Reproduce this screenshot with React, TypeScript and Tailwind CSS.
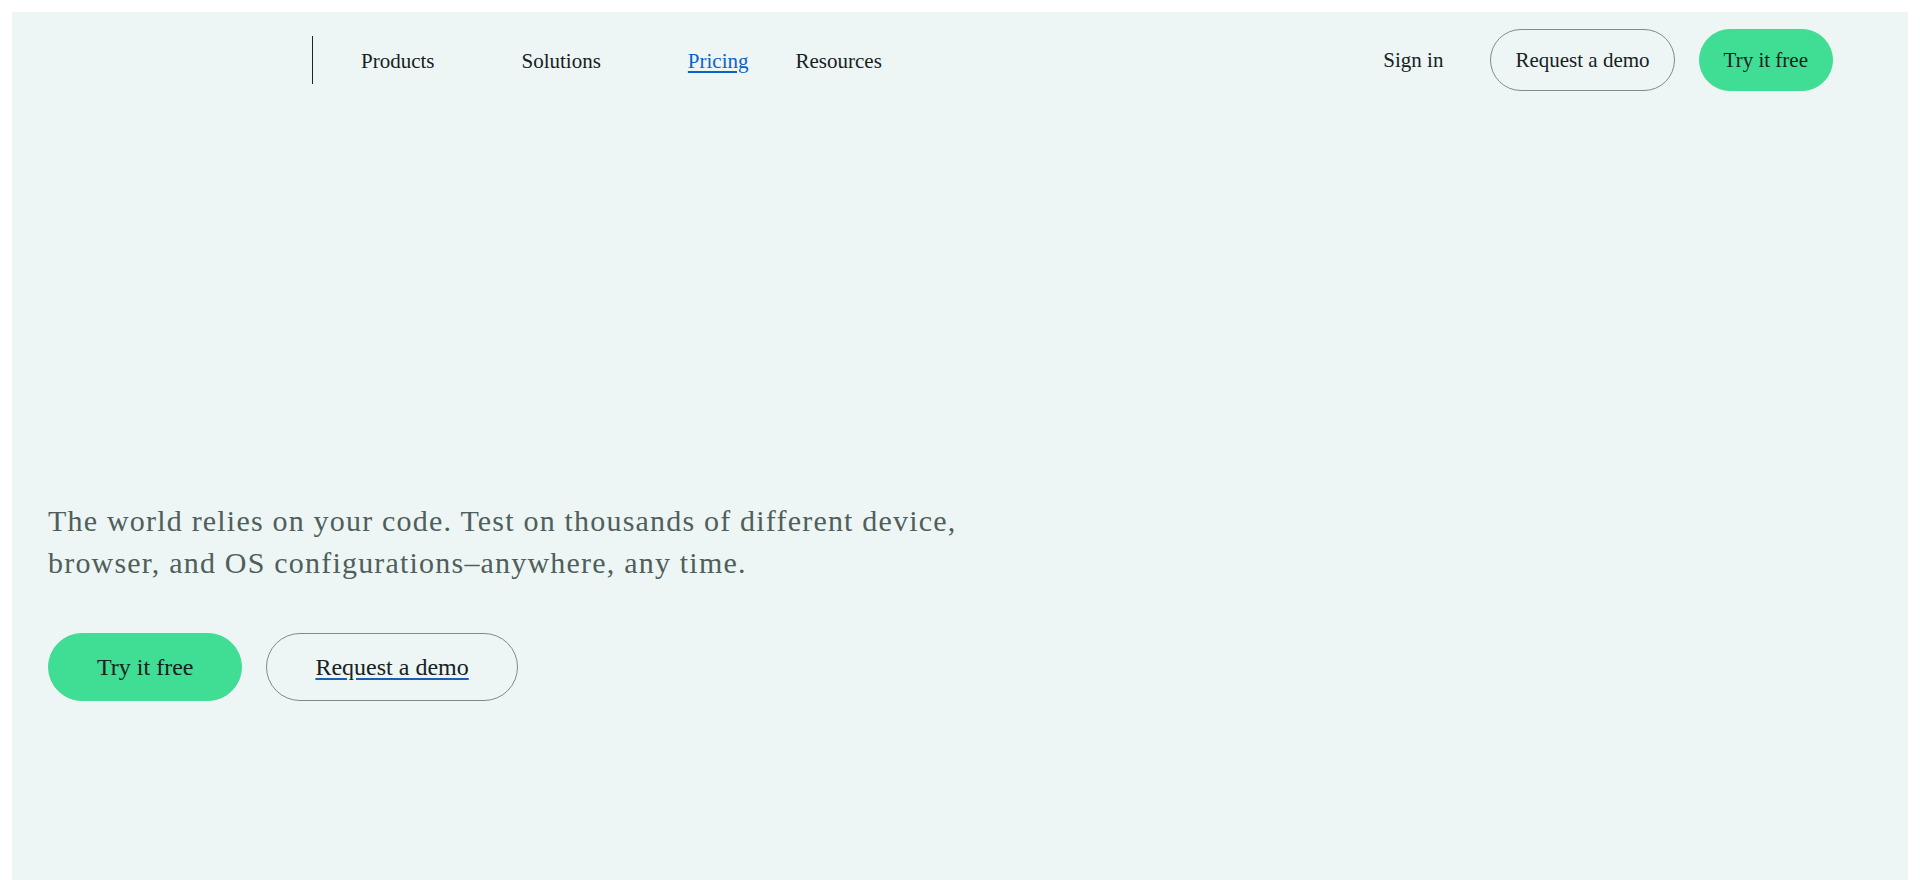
import React from "react";

const serif = "font-['Liberation_Serif','Times_New_Roman',serif]";

export default function App() {
  return (
    <div className={`min-h-screen bg-white p-3 ${serif}`}>
      <div className="bg-[#edf6f4] h-[868px] w-full flex flex-col">
        {/* Nav */}
        <nav className="flex items-center justify-between pt-[17px] pr-[75px]">
          <div className="flex items-center">
            <div className="w-[300px]" />
            <div className="w-px h-[48px] bg-[#1c2624]" />
            <a className="ml-[48px] mr-[87px] mt-[3px] text-[21px] text-[#17211f]">Products</a>
            <a className="mr-[87px] mt-[3px] text-[21px] text-[#17211f]">Solutions</a>
            <a className="mr-[47px] mt-[3px] text-[21px] text-[#0b63c8] underline underline-offset-[3px]">Pricing</a>
            <a className="mt-[3px] text-[21px] text-[#17211f]">Resources</a>
          </div>
          <div className="flex items-center">
            <a className="text-[21px] mt-[2px] text-[#17211f] mr-[47px]">Sign in</a>
            <a className="h-[62px] flex items-center pt-[2px] px-[24px] border border-[#7f8b89] rounded-full text-[21px] text-[#17211f]">
              Request a demo
            </a>
            <a className="ml-[24px] h-[62px] flex items-center pt-[2px] px-[24px] border border-[#40dd94] bg-[#40dd94] rounded-full text-[21px] text-[#17211f]">
              Try it free
            </a>
          </div>
        </nav>

        {/* Hero */}
        <div className="px-9 mt-[409px]">
          <p className="text-[30px] leading-[42px] tracking-[0.04em] text-[#4f5f5b]">
            The world relies on your code. Test on thousands of different device,
            <br />
            browser, and OS configurations–anywhere, any time.
          </p>
          <div className="flex items-center gap-6 mt-[49px]">
            <a className="h-[68px] flex items-center px-12 rounded-full bg-[#40dd94] border border-[#40dd94] text-[24px] text-[#17211f]">
              Try it free
            </a>
            <a className="h-[68px] flex items-center px-12 rounded-full border border-[#7f8b89] text-[24px] text-[#17211f] underline underline-offset-[3px] decoration-[#1a5fb4]">
              Request a demo
            </a>
          </div>
        </div>
      </div>
    </div>
  );
}
